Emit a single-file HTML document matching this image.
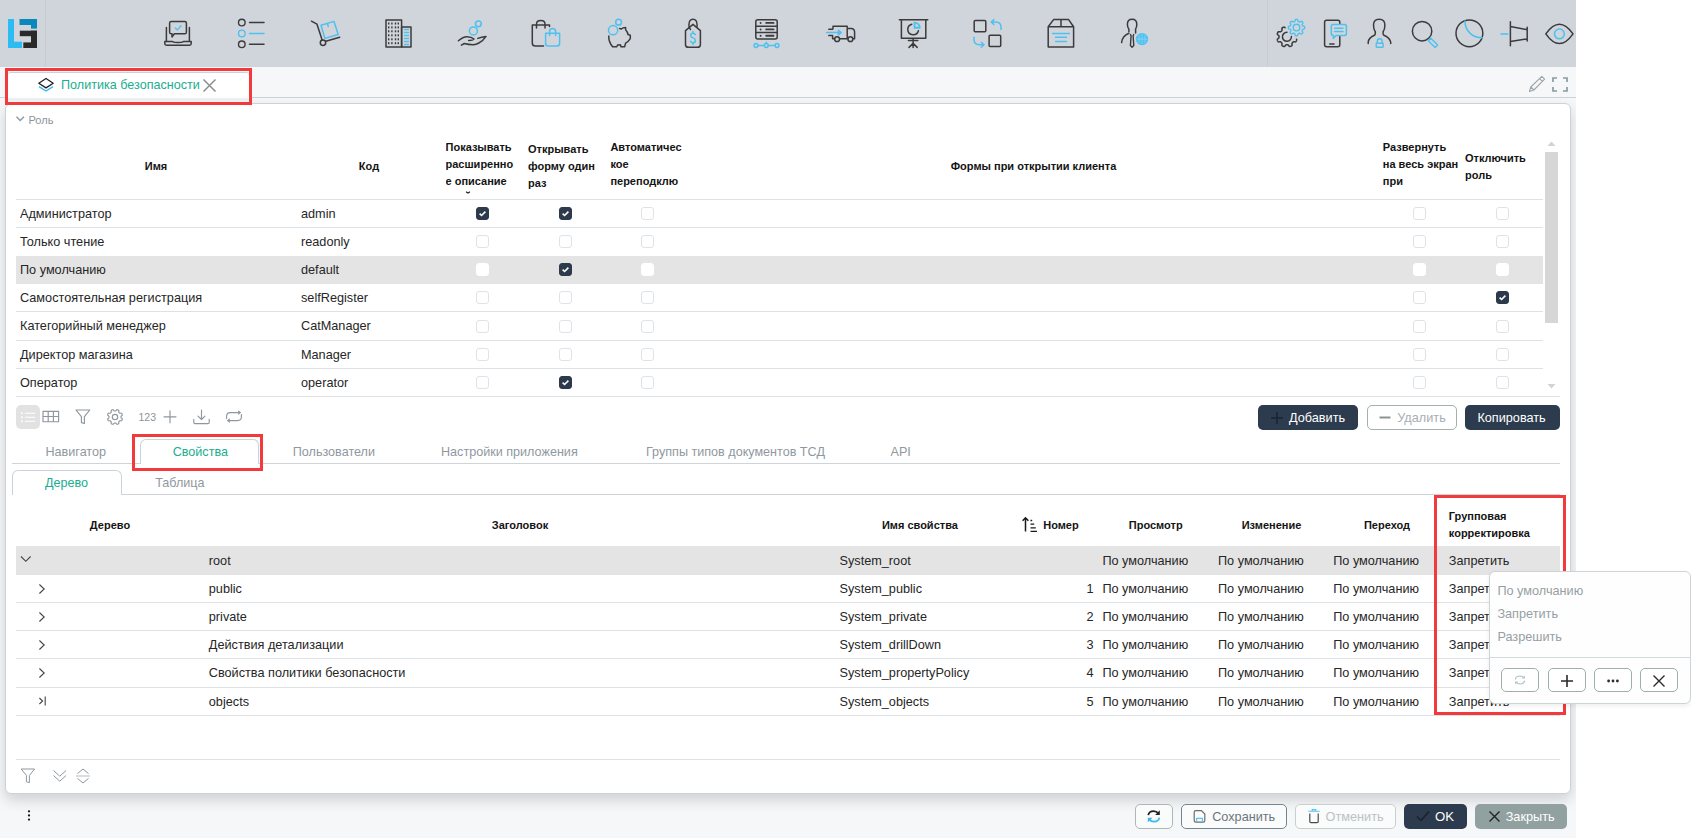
<!DOCTYPE html>
<html><head><meta charset="utf-8">
<style>
*{box-sizing:border-box}
html,body{margin:0;padding:0}
body{width:1691px;height:838px;position:relative;overflow:hidden;background:#fff;font-family:"Liberation Sans",sans-serif;color:#1e1e1e}
.a{position:absolute}
.t{position:absolute;white-space:nowrap}
.cb{position:absolute;width:13px;height:13px;border:1px solid #dfe2e6;border-radius:3px;background:#fff}
.cb.on{background:#2c3a4b;border-color:#2c3a4b}
.cb.hl{border-color:#fff}
.red{position:absolute;border:3px solid #f2393b}
.btn{position:absolute;border-radius:5px}
</style></head><body>

<div class="a" style="left:0;top:0;width:1576px;height:838px;overflow:hidden">
<div class="a" style="left:0px;top:0px;width:1576px;height:838px;background:#f6f7f9"></div>
<div class="a" style="left:0px;top:0px;width:1576px;height:67px;background:#d0d4db"></div>
<svg class="a" style="left:0;top:0" width="1576" height="67" viewBox="0 0 1576 67">
<rect x="8" y="19" width="6" height="29" fill="#2bbcf4"/>
<rect x="8" y="41.7" width="14" height="6.3" fill="#2bbcf4"/>
<rect x="19.5" y="19" width="17.5" height="6" fill="#0a87bb"/>
<rect x="31" y="19" width="6" height="9.6" fill="#0a87bb"/>
<rect x="19.8" y="30.7" width="17.2" height="5.5" fill="#2a2a2a"/>
<rect x="31" y="30.7" width="6" height="17.3" fill="#2a2a2a"/>
<rect x="23.3" y="42.4" width="13.7" height="5.6" fill="#2a2a2a"/>
<line x1="45.5" y1="0" x2="45.5" y2="67" stroke="#c8ccd2" stroke-width="1"/>
<line x1="1267.5" y1="0" x2="1267.5" y2="67" stroke="#c9cccf" stroke-width="1"/>

   <g fill="none" stroke="#3b3b3b" stroke-width="1.5" stroke-linecap="round" stroke-linejoin="round">
    <!-- 1 laptop chat -->
    <path d="M166.4 27.5V41.2M189.4 27.5V41.2"/>
    <path d="M164.8 41.6H172.5Q174 42.6 178 42.6Q182 42.6 183.5 41.6H191.2V43.6Q191.2 45.3 189.5 45.3H166.5Q164.8 45.3 164.8 43.6Z"/>
    <path d="M171.2 21.6H184.8Q186.4 21.6 186.4 23.2V32.2Q186.4 33.8 184.8 33.8H174.4L172 37V33.8H171.2Q169.6 33.8 169.6 32.2V23.2Q169.6 21.6 171.2 21.6Z"/>
    <!-- 2 list -->
    <circle cx="241.8" cy="22.6" r="3.3" stroke-width="1.4"/><circle cx="241.8" cy="44.3" r="3.3" stroke-width="1.4"/>
    <path d="M249.5 22.6H264M249.5 44.3H264"/>
    <!-- 3 hand truck -->
    <path d="M311.4 21.2L317 24.2L322.2 40.2"/>
    <circle cx="323" cy="42.8" r="2.7"/>
    <path d="M325.8 41.3L339.7 37.3"/>
    <!-- 4 buildings -->
    <rect x="386" y="20" width="15.6" height="27"/>
    <rect x="401.6" y="27.1" width="9.4" height="19.9"/>
    <!-- 5 hand -->
    <path d="M458.4 40.8Q463 36.6 467.2 36.7Q471.5 36.8 474 39Q472.5 40.6 468.6 40.4"/>
    <path d="M477.8 38.4Q481.6 36.8 486 36.4Q483.5 40.5 478.8 43Q476 44.6 473.5 44.8Q468 44.6 464.3 43.5L461.4 45.1"/>
    <!-- 6 bags dark -->
    <path d="M549.5 26.5V25H532.3V43Q532.3 46.1 535.5 46.1H543.5"/>
    <path d="M536.5 28V24.2Q536.5 20.6 540.8 20.6Q545 20.6 545 24.2V28"/>
    <!-- 7 piggy -->
    <path d="M608.8 36Q608.4 41.5 612.6 46.8H616.6L617.8 44.8Q619.2 45.3 620.4 44.8L621 46.8H624.6L625.6 43.2Q628.3 41.8 630.3 38.6V35.3L628 34.5Q627.4 31.5 625.7 30L625.6 27.5Q622.8 27.6 621.3 29Q620.6 28.7 619.6 28.6"/>
    <!-- 8 tag -->
    <path d="M693 24.4L700.4 30.6V44.4Q700.4 47.3 697.5 47.3H688.4Q685.5 47.3 685.5 44.4V30.6Z"/>
    <path d="M690.5 29.5Q688.9 28.2 688.9 25.3Q688.9 19.2 693 19.2Q697.1 19.2 697.1 25.3Q697.1 26.2 696.8 27"/>
    <!-- 9 server -->
    <rect x="755.8" y="19.8" width="21.4" height="19.3" rx="2"/>
    <path d="M755.8 26.2H777.2M755.8 32.6H777.2"/>
    <path d="M766.2 22.9H773.5M766.2 29.4H773.5M766.2 35.8H773.5M760.6 22.9V23M760.6 29.4V29.5M760.6 35.8V35.9" stroke-width="1.9"/>
    <!-- 10 truck -->
    <path d="M833 28.5V26.2H847.2V38.7M847.2 28.4H851.2Q854.6 28.4 854.6 32.2V38.7H853.2M840 38.8H847.6M828.8 29.2H832.8M828.8 35.5H832.6V38.7H834.4"/>
    <circle cx="837.1" cy="39.2" r="2.4"/><circle cx="850.4" cy="39.2" r="2.4"/>
    <!-- 11 presentation -->
    <path d="M899.4 19.7H927.8M901.4 19.7V38.3H925.8V19.7"/>
    <path d="M911.8 24.2A5.4 5.4 0 1 0 918.4 30.8"/>
    <path d="M913.1 38.4V47.4M908.4 40.5H917.8M909 47.4L913.1 43.4L917.2 47.4"/>
    <!-- 12 swap squares -->
    <rect x="974.2" y="20.4" width="11.6" height="11.3" rx="1"/>
    <rect x="989.1" y="35.3" width="11.6" height="11.3" rx="1"/>
    <!-- 13 box -->
    <path d="M1053.6 19.6H1068.6L1073.6 26.7V47.1H1048.2V26.7Z M1048.2 26.7H1073.6M1061 19.6V26.7"/>
    <!-- 14 person -->
    <path d="M1128.9 31.8V29.2Q1127.4 27.5 1127.4 24.3Q1127.4 19.2 1132.1 19.2Q1136.8 19.2 1136.8 24.3Q1136.8 27.4 1135.6 29.1V33"/>
    <path d="M1128.9 33.2Q1122.2 35.8 1121.6 42.6"/>
    <path d="M1130.5 34.6L1131.1 35.8L1130.4 45.6L1132.1 47.3L1133.8 45.6L1133.1 35.8L1133.7 34.6" stroke-width="1.4"/>
    <!-- R1 gear dark -->
    <path d="M1296.57 39.19 L1296.68 39.49 L1296.69 39.77 L1296.65 40.03 L1296.58 40.29 L1296.49 40.54 L1296.39 40.79 L1296.27 41.03 L1296.15 41.27 L1296.00 41.50 L1295.81 41.70 L1295.55 41.85 L1295.16 41.91 L1294.63 41.87 L1294.09 41.78 L1293.68 41.76 L1293.41 41.82 L1293.21 41.94 L1293.05 42.08 L1292.89 42.22 L1292.74 42.37 L1292.59 42.52 L1292.45 42.67 L1292.30 42.82 L1292.16 42.98 L1292.04 43.17 L1291.97 43.43 L1291.97 43.81 L1292.05 44.34 L1292.11 44.88 L1292.07 45.30 L1291.93 45.58 L1291.73 45.77 L1291.51 45.92 L1291.27 46.05 L1291.03 46.17 L1290.78 46.27 L1290.53 46.36 L1290.27 46.44 L1290.01 46.49 L1289.73 46.49 L1289.44 46.40 L1289.11 46.14 L1288.77 45.72 L1288.46 45.29 L1288.19 45.01 L1287.95 44.87 L1287.73 44.82 L1287.52 44.80 L1287.31 44.80 L1287.10 44.80 L1286.89 44.80 L1286.68 44.80 L1286.46 44.80 L1286.25 44.82 L1286.03 44.88 L1285.79 45.02 L1285.52 45.32 L1285.20 45.76 L1284.86 46.17 L1284.54 46.41 L1284.24 46.49 L1283.97 46.49 L1283.70 46.43 L1283.45 46.36 L1283.20 46.26 L1282.95 46.16 L1282.71 46.04 L1282.47 45.91 L1282.25 45.76 L1282.06 45.56 L1281.92 45.27 L1281.89 44.84 L1281.96 44.29 L1282.03 43.77 L1282.03 43.40 L1281.95 43.15 L1281.83 42.97 L1281.69 42.81 L1281.54 42.66 L1281.39 42.51 L1281.24 42.36 L1281.10 42.21 L1280.94 42.06 L1280.78 41.93 L1280.57 41.82 L1280.29 41.76 L1279.87 41.79 L1279.32 41.87 L1278.80 41.91 L1278.42 41.84 L1278.17 41.68 L1277.99 41.48 L1277.84 41.25 L1277.72 41.01 L1277.61 40.77 L1277.51 40.52 L1277.42 40.27 L1277.35 40.01 L1277.31 39.74 L1277.32 39.46 L1277.45 39.16 L1277.75 38.83 L1278.19 38.49 L1278.60 38.18 L1278.84 37.93 L1278.95 37.70 L1278.99 37.48 L1279.00 37.27 L1279.00 37.06 L1279.00 36.84 L1279.00 36.63 L1279.00 36.42 L1278.99 36.21 L1278.97 36.00 L1278.90 35.77 L1278.72 35.53 L1278.38 35.25 L1277.93 34.92 L1277.55 34.58 L1277.36 34.26 L1277.30 33.97 L1277.32 33.70 L1277.38 33.44 L1277.47 33.18 L1277.56 32.93 L1277.67 32.69 L1277.79 32.45 L1277.92 32.22 L1278.09 32.00 L1278.30 31.82 L1278.62 31.70 L1279.09 31.70 L1279.65 31.78 L1280.13 31.84 L1280.47 31.82 L1280.70 31.72 L1280.87 31.60 L1281.03 31.45 L1281.18 31.31 L1281.33 31.16 L1281.48 31.01 L1281.63 30.86 L1281.77 30.70 L1281.90 30.53 L1282.00 30.31 L1282.04 30.00 L1282.00 29.54 L1281.91 28.99 L1281.89 28.49 L1281.99 28.15 L1282.16 27.92 L1282.38 27.75 L1282.61 27.61 L1282.84 27.49 L1283.09 27.38 L1283.34 27.28 L1283.59 27.20 L1283.85 27.13 L1284.12 27.10 L1284.41 27.14 L1284.72 27.30 L1285.06 27.65" stroke-width="1.5"/>
    <path d="M1291.4 36.4A4.5 4.5 0 1 1 1287 32.3" stroke-width="1.5"/>
    <!-- R2 phone -->
    <rect x="1324.6" y="20.3" width="15.2" height="26.4" rx="2"/>
    <path d="M1329.8 44H1334" stroke-width="1.6"/>
    <!-- R3 person lock -->
    <path d="M1368.2 43.5V42.2Q1368.6 37.8 1374.4 35.3Q1375.3 34.8 1375.3 33.4V31.8Q1373.5 29.5 1373.5 25Q1373.5 19.2 1379.2 19.2Q1384.9 19.2 1384.9 25Q1384.9 29.5 1383.1 31.8V33.4Q1383.1 34.8 1384 35.3Q1389.8 37.8 1390.7 42.2V43.5"/>
    <!-- R4 search -->
    <circle cx="1422.1" cy="31.2" r="9.7"/>
    <!-- R5 circle -->
    <circle cx="1469.4" cy="33.3" r="13.4"/>
    <!-- R6 megaphone -->
    <path d="M1510.4 21.8V45.8M1510.4 26.6L1527.2 29.7M1510.4 41.5L1527.2 38.9M1527.2 27.3V41"/>
    <!-- R7 eye -->
    <path d="M1545.8 33.9Q1559.4 14.5 1573 33.9Q1559.4 53.3 1545.8 33.9Z"/>
   </g>
   <g fill="none" stroke="#4ec1ef" stroke-width="1.5" stroke-linecap="round" stroke-linejoin="round">
    <path d="M175.2 28L177.4 29.9L181 25.8" stroke-width="1.3"/>
    <circle cx="241.8" cy="33.4" r="3.3" stroke-width="1.4"/><path d="M249.5 33.4H264"/>
    <path d="M321 25.3L334 21.4L338.2 34.5L324.9 38.4Z M327.4 23.4L328.3 26.6"/>
    <path d="M404.5 29.5H408.5M404.5 32.5H408.5M404.5 35.5H408.5M404.5 38.5H408.5M404.5 41.5H408.5M404.5 44.5H408.5" stroke-width="1.3"/>
    <circle cx="478.4" cy="23.8" r="2.9"/><circle cx="473.4" cy="30.9" r="4"/>
    <path d="M545.6 33.2H559.6V43.6Q559.6 46.1 557 46.1H548.2Q545.6 46.1 545.6 43.6Z"/>
    <path d="M549.6 35.5V31.6Q549.6 28.6 552.6 28.6Q555.6 28.6 555.6 31.6V35.5"/>
    <circle cx="618.6" cy="22.2" r="2.9"/><circle cx="613.1" cy="30.2" r="4.6"/>
    <path d="M695.4 34.6Q694.6 33.2 693 33.2Q690.7 33.2 690.7 35.4Q690.7 37.2 693 37.9Q695.4 38.7 695.4 40.7Q695.4 42.8 693 42.8Q691.2 42.8 690.5 41.4M693 31.6V33M693 43V44.4"/>
    <path d="M756 45.5H777M766.3 42.2V43.5"/>
    <circle cx="756" cy="45.5" r="1.9" fill="#d0d4db"/><circle cx="766.3" cy="45.5" r="1.9" fill="#d0d4db"/><circle cx="777" cy="45.5" r="1.9" fill="#d0d4db"/>
    <path d="M826.6 32.6H839"/><path d="M838.4 30.2L841.2 32.6L838.4 35Z" fill="#4ec1ef"/>
    <path d="M914.6 22.6V27.8H919.8A5.4 5.4 0 0 0 914.6 22.6Z" stroke-width="1.9"/>
    <path d="M1001 29.6V27.4Q1001 22 995.6 22H991.6M993.8 19.6L991.2 22L993.8 24.4"/>
    <path d="M974 37.3V39.6Q974 44.8 979.4 44.8H983.6M981.4 42.4L984 44.8L981.4 47.2"/>
    <path d="M1052.6 33.4H1069.4M1055.6 37.3H1066.4M1055.6 41.4H1066.4"/>
    <path d="M1304.70 27.60 L1304.69 27.81 L1304.68 28.03 L1304.64 28.24 L1304.58 28.45 L1304.46 28.65 L1304.23 28.82 L1303.84 28.96 L1303.38 29.06 L1302.99 29.16 L1302.75 29.27 L1302.61 29.41 L1302.52 29.56 L1302.45 29.71 L1302.38 29.86 L1302.32 30.01 L1302.26 30.16 L1302.20 30.32 L1302.14 30.47 L1302.10 30.64 L1302.10 30.84 L1302.19 31.09 L1302.40 31.43 L1302.66 31.83 L1302.83 32.20 L1302.87 32.49 L1302.82 32.71 L1302.71 32.91 L1302.59 33.08 L1302.45 33.24 L1302.30 33.40 L1302.14 33.55 L1301.98 33.69 L1301.81 33.81 L1301.61 33.92 L1301.39 33.97 L1301.10 33.93 L1300.73 33.76 L1300.33 33.50 L1299.99 33.29 L1299.74 33.20 L1299.54 33.20 L1299.37 33.24 L1299.22 33.30 L1299.06 33.36 L1298.91 33.42 L1298.76 33.48 L1298.61 33.55 L1298.46 33.62 L1298.31 33.71 L1298.17 33.85 L1298.06 34.09 L1297.96 34.48 L1297.86 34.94 L1297.72 35.33 L1297.55 35.56 L1297.35 35.68 L1297.14 35.74 L1296.93 35.78 L1296.71 35.79 L1296.50 35.80 L1296.29 35.79 L1296.07 35.78 L1295.86 35.74 L1295.65 35.68 L1295.45 35.56 L1295.28 35.33 L1295.14 34.94 L1295.04 34.48 L1294.94 34.09 L1294.83 33.85 L1294.69 33.71 L1294.54 33.62 L1294.39 33.55 L1294.24 33.48 L1294.09 33.42 L1293.94 33.36 L1293.78 33.30 L1293.63 33.24 L1293.46 33.20 L1293.26 33.20 L1293.01 33.29 L1292.67 33.50 L1292.27 33.76 L1291.90 33.93 L1291.61 33.97 L1291.39 33.92 L1291.19 33.81 L1291.02 33.69 L1290.86 33.55 L1290.70 33.40 L1290.55 33.24 L1290.41 33.08 L1290.29 32.91 L1290.18 32.71 L1290.13 32.49 L1290.17 32.20 L1290.34 31.83 L1290.60 31.43 L1290.81 31.09 L1290.90 30.84 L1290.90 30.64 L1290.86 30.47 L1290.80 30.32 L1290.74 30.16 L1290.68 30.01 L1290.62 29.86 L1290.55 29.71 L1290.48 29.56 L1290.39 29.41 L1290.25 29.27 L1290.01 29.16 L1289.62 29.06 L1289.16 28.96 L1288.77 28.82 L1288.54 28.65 L1288.42 28.45 L1288.36 28.24 L1288.32 28.03 L1288.31 27.81 L1288.30 27.60 L1288.31 27.39 L1288.32 27.17 L1288.36 26.96 L1288.42 26.75 L1288.54 26.55 L1288.77 26.38 L1289.16 26.24 L1289.62 26.14 L1290.01 26.04 L1290.25 25.93 L1290.39 25.79 L1290.48 25.64 L1290.55 25.49 L1290.62 25.34 L1290.68 25.19 L1290.74 25.04 L1290.80 24.88 L1290.86 24.73 L1290.90 24.56 L1290.90 24.36 L1290.81 24.11 L1290.60 23.77 L1290.34 23.37 L1290.17 23.00 L1290.13 22.71 L1290.18 22.49 L1290.29 22.29 L1290.41 22.12 L1290.55 21.96 L1290.70 21.80 L1290.86 21.65 L1291.02 21.51 L1291.19 21.39 L1291.39 21.28 L1291.61 21.23 L1291.90 21.27 L1292.27 21.44 L1292.67 21.70 L1293.01 21.91 L1293.26 22.00 L1293.46 22.00 L1293.63 21.96 L1293.78 21.90 L1293.94 21.84 L1294.09 21.78 L1294.24 21.72 L1294.39 21.65 L1294.54 21.58 L1294.69 21.49 L1294.83 21.35 L1294.94 21.11 L1295.04 20.72 L1295.14 20.26 L1295.28 19.87 L1295.45 19.64 L1295.65 19.52 L1295.86 19.46 L1296.07 19.42 L1296.29 19.41 L1296.50 19.40 L1296.71 19.41 L1296.93 19.42 L1297.14 19.46 L1297.35 19.52 L1297.55 19.64 L1297.72 19.87 L1297.86 20.26 L1297.96 20.72 L1298.06 21.11 L1298.17 21.35 L1298.31 21.49 L1298.46 21.58 L1298.61 21.65 L1298.76 21.72 L1298.91 21.78 L1299.06 21.84 L1299.22 21.90 L1299.37 21.96 L1299.54 22.00 L1299.74 22.00 L1299.99 21.91 L1300.33 21.70 L1300.73 21.44 L1301.10 21.27 L1301.39 21.23 L1301.61 21.28 L1301.81 21.39 L1301.98 21.51 L1302.14 21.65 L1302.30 21.80 L1302.45 21.96 L1302.59 22.12 L1302.71 22.29 L1302.82 22.49 L1302.87 22.71 L1302.83 23.00 L1302.66 23.37 L1302.40 23.77 L1302.19 24.11 L1302.10 24.36 L1302.10 24.56 L1302.14 24.73 L1302.20 24.88 L1302.26 25.04 L1302.32 25.19 L1302.38 25.34 L1302.45 25.49 L1302.52 25.64 L1302.61 25.79 L1302.75 25.93 L1302.99 26.04 L1303.38 26.14 L1303.84 26.24 L1304.23 26.38 L1304.46 26.55 L1304.58 26.75 L1304.64 26.96 L1304.68 27.17 L1304.69 27.39 L1304.70 27.60Z" stroke-width="1.4"/>
    <circle cx="1296.5" cy="27.6" r="3.3" stroke-width="1.4"/>
    <path d="M1333 24.4H1344.5Q1346.4 24.4 1346.4 26.3V33.6Q1346.4 35.5 1344.5 35.5H1336L1333.3 38.4V35.5Q1331.3 35.5 1331.3 33.6V26.3Q1331.3 24.4 1333 24.4Z" fill="#d0d4db"/>
    <path d="M1334.6 28.3H1343M1334.6 31.5H1343" stroke-width="1.4"/>
    <rect x="1376.2" y="43.2" width="7" height="4" rx=".6" stroke-width="1.4"/>
    <path d="M1377.3 43V41.3Q1377.3 38.8 1379.7 38.8Q1382.1 38.8 1382.1 41.3V43" stroke-width="1.4"/>
    <path d="M1428.3 40.8L1430.8 38.3L1437.6 45.1L1435.1 47.6Z" stroke-width="1.4"/>
    <path d="M1465 21A16.3 16.3 0 0 0 1482.2 37.7"/>
    <path d="M1501 33.9H1507.8"/>
    <circle cx="1559.4" cy="33.9" r="4.9"/>
   </g>
   <circle cx="1142" cy="39.1" r="6.2" fill="#4ec1ef"/>
   <path d="M1139 35V43.5M1142 34V44M1145 35V43.5M1136.5 39.1H1147.5" stroke="#9fdcf5" stroke-width=".6" fill="none"/>
   <g fill="#3b3b3b">
    <rect x="388.0" y="22.5" width="1.4" height="2"/><rect x="388.0" y="26.4" width="1.4" height="2"/><rect x="388.0" y="30.3" width="1.4" height="2"/><rect x="388.0" y="34.3" width="1.4" height="2"/><rect x="388.0" y="38.3" width="1.4" height="2"/><rect x="388.0" y="42.2" width="1.4" height="2"/><rect x="391.2" y="22.5" width="1.4" height="2"/><rect x="391.2" y="26.4" width="1.4" height="2"/><rect x="391.2" y="30.3" width="1.4" height="2"/><rect x="391.2" y="34.3" width="1.4" height="2"/><rect x="391.2" y="38.3" width="1.4" height="2"/><rect x="391.2" y="42.2" width="1.4" height="2"/><rect x="394.8" y="22.5" width="1.4" height="2"/><rect x="394.8" y="26.4" width="1.4" height="2"/><rect x="394.8" y="30.3" width="1.4" height="2"/><rect x="394.8" y="34.3" width="1.4" height="2"/><rect x="394.8" y="38.3" width="1.4" height="2"/><rect x="394.8" y="42.2" width="1.4" height="2"/><rect x="397.6" y="22.5" width="1.4" height="2"/><rect x="397.6" y="26.4" width="1.4" height="2"/><rect x="397.6" y="30.3" width="1.4" height="2"/><rect x="397.6" y="34.3" width="1.4" height="2"/><rect x="397.6" y="38.3" width="1.4" height="2"/><rect x="397.6" y="42.2" width="1.4" height="2"/>
   </g>

</svg>
<div class="a" style="left:0px;top:97px;width:1576px;height:1px;background:#cbd2d8"></div>
<div class="a" style="left:8px;top:72px;width:241px;height:29px;background:#fff;border-top:1px solid #c9d1d9;border-radius:3px 3px 0 0"></div>
<div class="a" style="left:8px;top:98px;width:241px;height:3px;background:#eff1f3"></div>
<svg class="a" style="left:36px;top:76px;" width="20" height="18" viewBox="0 0 20 18"><path d="M10 2.5L17.2 7.2L10 11.9L2.8 7.2Z" fill="none" stroke="#222" stroke-width="1.3" stroke-linejoin="round"/><path d="M3 10.6L10 15L17 10.6" fill="none" stroke="#3db8ee" stroke-width="1.4"/></svg>
<div class="t" style="left:61px;top:74.73px;height:20px;line-height:20px;font-size:12.6px;color:#20ad8f;font-weight:normal;">Политика безопасности</div>
<svg class="a" style="left:202px;top:78px;" width="15" height="15" viewBox="0 0 15 15"><path d="M1.5 1.5L13.5 13.5M13.5 1.5L1.5 13.5" stroke="#8e8e8e" stroke-width="1.5"/></svg>
<svg class="a" style="left:1527px;top:75px;" width="20" height="19" viewBox="0 0 20 19"><path d="M2.5 16.5L3.8 12L14.8 1.4L17.6 4.2L6.9 15Z M12.6 3.6L15.4 6.4 M3.8 12L6.9 15" fill="none" stroke="#9aa5ac" stroke-width="1.1" stroke-linejoin="round"/></svg>
<svg class="a" style="left:1551px;top:76px;" width="18" height="17" viewBox="0 0 18 17"><path d="M2 6V2H6M12 2H16V6M16 11V15H12M6 15H2V11" fill="none" stroke="#8b9aa4" stroke-width="1.7"/></svg>
<div class="a" style="left:5px;top:103px;width:1566px;height:691px;background:#fff;border:1px solid #cfd2d5;border-radius:6px;box-shadow:0 6px 14px rgba(0,0,0,.16)"></div>
<svg class="a" style="left:15px;top:115px;" width="11" height="8" viewBox="0 0 11 8"><path d="M1.5 1.8L5.2 5.6L9 1.8" fill="none" stroke="#8a9aa6" stroke-width="1.4"/></svg>
<div class="t" style="left:28.5px;top:110.40px;height:20px;line-height:20px;font-size:11px;color:#8b949b;font-weight:normal;">Роль</div>
<div class="t" style="left:-144px;width:600px;text-align:center;top:156.30px;height:20px;line-height:20px;font-size:11px;color:#141414;font-weight:bold;">Имя</div>
<div class="t" style="left:69px;width:600px;text-align:center;top:156.30px;height:20px;line-height:20px;font-size:11px;color:#141414;font-weight:bold;">Код</div>
<div class="t" style="left:733.5px;width:600px;text-align:center;top:156.30px;height:20px;line-height:20px;font-size:11px;color:#141414;font-weight:bold;">Формы при открытии клиента</div>
<div class="a" style="left:445.5px;top:139px;width:90px;height:55px;overflow:hidden;font-weight:bold;font-size:11px;line-height:16.8px;color:#141414;white-space:normal">Показывать<br>расширенно<br>е описание<br>краткое</div>
<svg class="a" style="left:464px;top:189px;" width="8" height="6" viewBox="0 0 8 6"><path d="M2.2 2.6Q4 5.2 5.8 2.6" fill="none" stroke="#222" stroke-width="1.2"/></svg>
<div class="a" style="left:528px;top:141.3px;width:90px;height:52.69999999999999px;overflow:hidden;font-weight:bold;font-size:11px;line-height:16.8px;color:#141414;white-space:normal">Открывать<br>форму один<br>раз</div>
<div class="a" style="left:610.4px;top:139px;width:90px;height:55px;overflow:hidden;font-weight:bold;font-size:11px;line-height:16.8px;color:#141414;white-space:normal">Автоматичес<br>кое<br>переподклю<br>чение</div>
<div class="a" style="left:1382.8px;top:139px;width:90px;height:55px;overflow:hidden;font-weight:bold;font-size:11px;line-height:16.8px;color:#141414;white-space:normal">Развернуть<br>на весь экран<br>при<br>открытии</div>
<div class="a" style="left:1465px;top:150px;width:90px;height:44px;overflow:hidden;font-weight:bold;font-size:11px;line-height:16.8px;color:#141414;white-space:normal">Отключить<br>роль</div>
<div class="t" style="left:20px;top:203.73px;height:20px;line-height:20px;font-size:12.7px;color:#262626;font-weight:normal;">Администратор</div>
<div class="t" style="left:301px;top:203.73px;height:20px;line-height:20px;font-size:12.7px;color:#262626;font-weight:normal;">admin</div>
<div class="cb on" style="left:476.0px;top:207.0px"><svg width="11" height="11" viewBox="0 0 11 11" style="position:absolute;left:0;top:0"><path d="M2.6 5.6L4.6 7.5L8.4 3.6" fill="none" stroke="#fff" stroke-width="1.6"/></svg></div>
<div class="cb on" style="left:558.9px;top:207.0px"><svg width="11" height="11" viewBox="0 0 11 11" style="position:absolute;left:0;top:0"><path d="M2.6 5.6L4.6 7.5L8.4 3.6" fill="none" stroke="#fff" stroke-width="1.6"/></svg></div>
<div class="cb" style="left:640.9px;top:207.0px"></div>
<div class="cb" style="left:1412.9px;top:207.0px"></div>
<div class="cb" style="left:1496.0px;top:207.0px"></div>
<div class="t" style="left:20px;top:231.73px;height:20px;line-height:20px;font-size:12.7px;color:#262626;font-weight:normal;">Только чтение</div>
<div class="t" style="left:301px;top:231.73px;height:20px;line-height:20px;font-size:12.7px;color:#262626;font-weight:normal;">readonly</div>
<div class="cb" style="left:476.0px;top:235.0px"></div>
<div class="cb" style="left:558.9px;top:235.0px"></div>
<div class="cb" style="left:640.9px;top:235.0px"></div>
<div class="cb" style="left:1412.9px;top:235.0px"></div>
<div class="cb" style="left:1496.0px;top:235.0px"></div>
<div class="a" style="left:16px;top:255.5px;width:1527px;height:28px;background:#e4e4e4"></div>
<div class="t" style="left:20px;top:259.73px;height:20px;line-height:20px;font-size:12.7px;color:#262626;font-weight:normal;">По умолчанию</div>
<div class="t" style="left:301px;top:259.73px;height:20px;line-height:20px;font-size:12.7px;color:#262626;font-weight:normal;">default</div>
<div class="cb hl" style="left:476.0px;top:263.0px"></div>
<div class="cb on" style="left:558.9px;top:263.0px"><svg width="11" height="11" viewBox="0 0 11 11" style="position:absolute;left:0;top:0"><path d="M2.6 5.6L4.6 7.5L8.4 3.6" fill="none" stroke="#fff" stroke-width="1.6"/></svg></div>
<div class="cb hl" style="left:640.9px;top:263.0px"></div>
<div class="cb hl" style="left:1412.9px;top:263.0px"></div>
<div class="cb hl" style="left:1496.0px;top:263.0px"></div>
<div class="t" style="left:20px;top:287.73px;height:20px;line-height:20px;font-size:12.7px;color:#262626;font-weight:normal;">Самостоятельная регистрация</div>
<div class="t" style="left:301px;top:287.73px;height:20px;line-height:20px;font-size:12.7px;color:#262626;font-weight:normal;">selfRegister</div>
<div class="cb" style="left:476.0px;top:291.0px"></div>
<div class="cb" style="left:558.9px;top:291.0px"></div>
<div class="cb" style="left:640.9px;top:291.0px"></div>
<div class="cb" style="left:1412.9px;top:291.0px"></div>
<div class="cb on" style="left:1496.0px;top:291.0px"><svg width="11" height="11" viewBox="0 0 11 11" style="position:absolute;left:0;top:0"><path d="M2.6 5.6L4.6 7.5L8.4 3.6" fill="none" stroke="#fff" stroke-width="1.6"/></svg></div>
<div class="t" style="left:20px;top:316.23px;height:20px;line-height:20px;font-size:12.7px;color:#262626;font-weight:normal;">Категорийный менеджер</div>
<div class="t" style="left:301px;top:316.23px;height:20px;line-height:20px;font-size:12.7px;color:#262626;font-weight:normal;">CatManager</div>
<div class="cb" style="left:476.0px;top:319.5px"></div>
<div class="cb" style="left:558.9px;top:319.5px"></div>
<div class="cb" style="left:640.9px;top:319.5px"></div>
<div class="cb" style="left:1412.9px;top:319.5px"></div>
<div class="cb" style="left:1496.0px;top:319.5px"></div>
<div class="t" style="left:20px;top:344.73px;height:20px;line-height:20px;font-size:12.7px;color:#262626;font-weight:normal;">Директор магазина</div>
<div class="t" style="left:301px;top:344.73px;height:20px;line-height:20px;font-size:12.7px;color:#262626;font-weight:normal;">Manager</div>
<div class="cb" style="left:476.0px;top:348.0px"></div>
<div class="cb" style="left:558.9px;top:348.0px"></div>
<div class="cb" style="left:640.9px;top:348.0px"></div>
<div class="cb" style="left:1412.9px;top:348.0px"></div>
<div class="cb" style="left:1496.0px;top:348.0px"></div>
<div class="t" style="left:20px;top:372.73px;height:20px;line-height:20px;font-size:12.7px;color:#262626;font-weight:normal;">Оператор</div>
<div class="t" style="left:301px;top:372.73px;height:20px;line-height:20px;font-size:12.7px;color:#262626;font-weight:normal;">operator</div>
<div class="cb" style="left:476.0px;top:376.0px"></div>
<div class="cb on" style="left:558.9px;top:376.0px"><svg width="11" height="11" viewBox="0 0 11 11" style="position:absolute;left:0;top:0"><path d="M2.6 5.6L4.6 7.5L8.4 3.6" fill="none" stroke="#fff" stroke-width="1.6"/></svg></div>
<div class="cb" style="left:640.9px;top:376.0px"></div>
<div class="cb" style="left:1412.9px;top:376.0px"></div>
<div class="cb" style="left:1496.0px;top:376.0px"></div>
<div class="a" style="left:16px;top:199px;width:1527px;height:1px;background:#dde2e7"></div>
<div class="a" style="left:16px;top:227px;width:1527px;height:1px;background:#dde2e7"></div>
<div class="a" style="left:16px;top:311px;width:1527px;height:1px;background:#dde2e7"></div>
<div class="a" style="left:16px;top:340px;width:1527px;height:1px;background:#dde2e7"></div>
<div class="a" style="left:16px;top:368px;width:1527px;height:1px;background:#dde2e7"></div>
<div class="a" style="left:16px;top:396px;width:1544px;height:1px;background:#dde2e7"></div>
<div class="a" style="left:1545px;top:152px;width:13px;height:171px;background:#d6d6d6"></div>
<svg class="a" style="left:1546px;top:140px;" width="11" height="7" viewBox="0 0 11 7"><path d="M1.5 6L5.5 1.5L9.5 6Z" fill="#d3d3d3"/></svg>
<svg class="a" style="left:1546px;top:383px;" width="11" height="7" viewBox="0 0 11 7"><path d="M1.5 1L5.5 5.5L9.5 1Z" fill="#d3d3d3"/></svg>
<div class="a" style="left:16px;top:405px;width:24px;height:24px;background:#e2e2e2;border-radius:5px"></div>
<svg class="a" style="left:16px;top:405px;" width="24" height="24" viewBox="0 0 24 24"><path d="M8.8 8.2H19M8.8 12.2H19M8.8 16.2H19" stroke="#fff" stroke-width="1.1"/><circle cx="5.8" cy="8.2" r="0.95" fill="#fff"/><circle cx="5.8" cy="12.2" r="0.95" fill="#fff"/><circle cx="5.8" cy="16.2" r="0.95" fill="#fff"/></svg>
<svg class="a" style="left:42px;top:410px;" width="18" height="13" viewBox="0 0 18 13"><path d="M1 1.3H16.6V11.7H1Z M1 6.5H16.6 M6.2 1.3V11.7 M11.4 1.3V11.7" fill="none" stroke="#8f969d" stroke-width="1.15" stroke-linejoin="round" stroke-linecap="round"/></svg>
<svg class="a" style="left:75px;top:409px;" width="16" height="16" viewBox="0 0 16 16"><path d="M1 1H14.8L9.4 7.6V14.5L6.4 13.6V7.6Z" fill="none" stroke="#8f969d" stroke-width="1.15" stroke-linejoin="round" stroke-linecap="round"/></svg>
<svg class="a" style="left:106px;top:408px;" width="18" height="18" viewBox="0 0 18 18"><circle cx="9" cy="9" r="2.7" fill="none" stroke="#8f969d" stroke-width="1.15" stroke-linejoin="round" stroke-linecap="round"/><path d="M15.00 9.00 L15.00 9.19 L15.01 9.38 L15.03 9.57 L15.10 9.77 L15.29 10.00 L15.62 10.26 L15.99 10.56 L16.23 10.86 L16.30 11.12 L16.29 11.37 L16.24 11.60 L16.16 11.83 L16.07 12.06 L15.96 12.27 L15.83 12.48 L15.66 12.66 L15.42 12.80 L15.05 12.84 L14.57 12.79 L14.15 12.74 L13.86 12.77 L13.67 12.86 L13.52 12.98 L13.38 13.11 L13.24 13.24 L13.11 13.38 L12.98 13.52 L12.86 13.67 L12.77 13.86 L12.74 14.15 L12.79 14.57 L12.84 15.05 L12.80 15.42 L12.66 15.66 L12.48 15.83 L12.27 15.96 L12.06 16.07 L11.83 16.16 L11.60 16.24 L11.37 16.29 L11.12 16.30 L10.86 16.23 L10.56 15.99 L10.26 15.62 L10.00 15.29 L9.77 15.10 L9.57 15.03 L9.38 15.01 L9.19 15.00 L9.00 15.00 L8.81 15.00 L8.62 15.01 L8.43 15.03 L8.23 15.10 L8.00 15.29 L7.74 15.62 L7.44 15.99 L7.14 16.23 L6.88 16.30 L6.63 16.29 L6.40 16.24 L6.17 16.16 L5.94 16.07 L5.73 15.96 L5.52 15.83 L5.34 15.66 L5.20 15.42 L5.16 15.05 L5.21 14.57 L5.26 14.15 L5.23 13.86 L5.14 13.67 L5.02 13.52 L4.89 13.38 L4.76 13.24 L4.62 13.11 L4.48 12.98 L4.33 12.86 L4.14 12.77 L3.85 12.74 L3.43 12.79 L2.95 12.84 L2.58 12.80 L2.34 12.66 L2.17 12.48 L2.04 12.27 L1.93 12.06 L1.84 11.83 L1.76 11.60 L1.71 11.37 L1.70 11.12 L1.77 10.86 L2.01 10.56 L2.38 10.26 L2.71 10.00 L2.90 9.77 L2.97 9.57 L2.99 9.38 L3.00 9.19 L3.00 9.00 L3.00 8.81 L2.99 8.62 L2.97 8.43 L2.90 8.23 L2.71 8.00 L2.38 7.74 L2.01 7.44 L1.77 7.14 L1.70 6.88 L1.71 6.63 L1.76 6.40 L1.84 6.17 L1.93 5.94 L2.04 5.73 L2.17 5.52 L2.34 5.34 L2.58 5.20 L2.95 5.16 L3.43 5.21 L3.85 5.26 L4.14 5.23 L4.33 5.14 L4.48 5.02 L4.62 4.89 L4.76 4.76 L4.89 4.62 L5.02 4.48 L5.14 4.33 L5.23 4.14 L5.26 3.85 L5.21 3.43 L5.16 2.95 L5.20 2.58 L5.34 2.34 L5.52 2.17 L5.73 2.04 L5.94 1.93 L6.17 1.84 L6.40 1.76 L6.63 1.71 L6.88 1.70 L7.14 1.77 L7.44 2.01 L7.74 2.38 L8.00 2.71 L8.23 2.90 L8.43 2.97 L8.62 2.99 L8.81 3.00 L9.00 3.00 L9.19 3.00 L9.38 2.99 L9.57 2.97 L9.77 2.90 L10.00 2.71 L10.26 2.38 L10.56 2.01 L10.86 1.77 L11.12 1.70 L11.37 1.71 L11.60 1.76 L11.83 1.84 L12.06 1.93 L12.27 2.04 L12.48 2.17 L12.66 2.34 L12.80 2.58 L12.84 2.95 L12.79 3.43 L12.74 3.85 L12.77 4.14 L12.86 4.33 L12.98 4.48 L13.11 4.62 L13.24 4.76 L13.38 4.89 L13.52 5.02 L13.67 5.14 L13.86 5.23 L14.15 5.26 L14.57 5.21 L15.05 5.16 L15.42 5.20 L15.66 5.34 L15.83 5.52 L15.96 5.73 L16.07 5.94 L16.16 6.17 L16.24 6.40 L16.29 6.63 L16.30 6.88 L16.23 7.14 L15.99 7.44 L15.62 7.74 L15.29 8.00 L15.10 8.23 L15.03 8.43 L15.01 8.62 L15.00 8.81 L15.00 9.00Z" fill="none" stroke="#8f969d" stroke-width="1.15" stroke-linejoin="round" stroke-linecap="round"/></svg>
<div class="t" style="left:138.5px;top:406.79px;height:20px;line-height:20px;font-size:10.5px;color:#8d949b;font-weight:normal;">123</div>
<svg class="a" style="left:162px;top:409px;" width="16" height="16" viewBox="0 0 16 16"><path d="M8 1.8V13.8M2 7.8H14" fill="none" stroke="#8f969d" stroke-width="1.15" stroke-linejoin="round" stroke-linecap="round" stroke-width="1.3"/></svg>
<svg class="a" style="left:192px;top:408px;" width="19" height="17" viewBox="0 0 19 17"><path d="M9.5 2V11.4M6 8.1L9.5 11.5L13 8.1M1.8 11.2V14.4Q1.8 15.6 3 15.6H16Q17.2 15.6 17.2 14.4V11.2" fill="none" stroke="#8f969d" stroke-width="1.15" stroke-linejoin="round" stroke-linecap="round"/></svg>
<svg class="a" style="left:224px;top:408px;" width="20" height="17" viewBox="0 0 20 17"><path d="M2.6 10.6V8.4Q2.6 4.6 6.4 4.6H14.4M17.4 6.6V8.8Q17.4 12.6 13.6 12.6H5.6" fill="none" stroke="#8f969d" stroke-width="1.15" stroke-linejoin="round" stroke-linecap="round"/><path d="M14.2 2.2L17.2 4.6L14.2 7Z M5.8 10.2L2.8 12.6L5.8 15Z" fill="#8f969d"/></svg>
<div class="a" style="left:1258px;top:405px;width:100px;height:25px;background:#2c3b4d;border-radius:5px"></div>
<svg class="a" style="left:1270px;top:411px;" width="14" height="14" viewBox="0 0 14 14"><path d="M7 1V13M1 7H13" stroke="#1b2632" stroke-width="1.6"/></svg>
<div class="t" style="left:1289px;top:408.03px;height:20px;line-height:20px;font-size:12.7px;color:#fff;font-weight:normal;">Добавить</div>
<div class="a" style="left:1366.5px;top:405px;width:90px;height:25px;background:#fff;border:1px solid #a3b0ae;border-radius:5px"></div>
<svg class="a" style="left:1379px;top:416px;" width="12" height="3" viewBox="0 0 12 3"><path d="M0.5 1.5H11.5" stroke="#8c9492" stroke-width="2"/></svg>
<div class="t" style="left:1397.3px;top:408.03px;height:20px;line-height:20px;font-size:12.7px;color:#a7aeb3;font-weight:normal;">Удалить</div>
<div class="a" style="left:1465px;top:405px;width:95px;height:25px;background:#2c3b4d;border-radius:5px"></div>
<div class="t" style="left:1477.4px;top:408.03px;height:20px;line-height:20px;font-size:12.7px;color:#fff;font-weight:normal;">Копировать</div>
<div class="a" style="left:12px;top:463px;width:1548px;height:1px;background:#cdd4da"></div>
<div class="a" style="left:139.5px;top:439px;width:119.5px;height:25px;background:#fff;border:1px solid #cbd3da;border-bottom:none;border-radius:6px 6px 0 0"></div>
<div class="t" style="left:45.5px;top:442.03px;height:20px;line-height:20px;font-size:12.6px;color:#8f989f;font-weight:normal;">Навигатор</div>
<div class="t" style="left:172.7px;top:442.03px;height:20px;line-height:20px;font-size:12.6px;color:#20ad8f;font-weight:normal;">Свойства</div>
<div class="t" style="left:292.8px;top:442.03px;height:20px;line-height:20px;font-size:12.6px;color:#8f989f;font-weight:normal;">Пользователи</div>
<div class="t" style="left:441px;top:442.03px;height:20px;line-height:20px;font-size:12.6px;color:#8f989f;font-weight:normal;">Настройки приложения</div>
<div class="t" style="left:646px;top:442.03px;height:20px;line-height:20px;font-size:12.6px;color:#8f989f;font-weight:normal;">Группы типов документов ТСД</div>
<div class="t" style="left:890.5px;top:442.03px;height:20px;line-height:20px;font-size:12.6px;color:#8f989f;font-weight:normal;">API</div>
<div class="a" style="left:12px;top:494px;width:1548px;height:1px;background:#cdd4da"></div>
<div class="a" style="left:12px;top:470px;width:110px;height:25px;background:#fff;border:1px solid #cbd3da;border-bottom:none;border-radius:6px 6px 0 0"></div>
<div class="t" style="left:45px;top:473.03px;height:20px;line-height:20px;font-size:12.6px;color:#20ad8f;font-weight:normal;">Дерево</div>
<div class="t" style="left:155.2px;top:473.03px;height:20px;line-height:20px;font-size:12.6px;color:#8f989f;font-weight:normal;">Таблица</div>
<div class="t" style="left:-190px;width:600px;text-align:center;top:515.40px;height:20px;line-height:20px;font-size:11px;color:#141414;font-weight:bold;">Дерево</div>
<div class="t" style="left:220px;width:600px;text-align:center;top:515.40px;height:20px;line-height:20px;font-size:11px;color:#141414;font-weight:bold;">Заголовок</div>
<div class="t" style="left:619.9px;width:600px;text-align:center;top:515.40px;height:20px;line-height:20px;font-size:11px;color:#141414;font-weight:bold;">Имя свойства</div>
<svg class="a" style="left:1021px;top:516px;" width="18" height="17" viewBox="0 0 18 17"><path d="M4.5 15.5V2M1.6 4.8L4.5 1.8L7.4 4.8" fill="none" stroke="#1a1a1a" stroke-width="1.5"/><path d="M9.5 4.5H11.2M9.5 8.2H13.2M9.5 11.8H14.8M9.5 15.3H16" stroke="#1a1a1a" stroke-width="1.3"/></svg>
<div class="t" style="left:1043.2px;top:515.40px;height:20px;line-height:20px;font-size:11px;color:#141414;font-weight:bold;">Номер</div>
<div class="t" style="left:855.7px;width:600px;text-align:center;top:515.40px;height:20px;line-height:20px;font-size:11px;color:#141414;font-weight:bold;">Просмотр</div>
<div class="t" style="left:971.5px;width:600px;text-align:center;top:515.40px;height:20px;line-height:20px;font-size:11px;color:#141414;font-weight:bold;">Изменение</div>
<div class="t" style="left:1087px;width:600px;text-align:center;top:515.40px;height:20px;line-height:20px;font-size:11px;color:#141414;font-weight:bold;">Переход</div>
<div class="a" style="left:1448.8px;top:507.8px;width:110px;height:40px;font-weight:bold;font-size:11px;line-height:16.8px;color:#141414;white-space:normal;line-height:17.4px">Групповая<br>корректировка</div>
<div class="a" style="left:16px;top:546px;width:1544px;height:28.5px;background:#e4e4e4"></div>
<div class="t" style="left:208.8px;top:550.88px;height:20px;line-height:20px;font-size:12.7px;color:#262626;font-weight:normal;">root</div>
<div class="t" style="left:839.5px;top:550.88px;height:20px;line-height:20px;font-size:12.7px;color:#262626;font-weight:normal;">System_root</div>
<div class="t" style="left:1102.4px;top:550.88px;height:20px;line-height:20px;font-size:12.7px;color:#262626;font-weight:normal;">По умолчанию</div>
<div class="t" style="left:1218px;top:550.88px;height:20px;line-height:20px;font-size:12.7px;color:#262626;font-weight:normal;">По умолчанию</div>
<div class="t" style="left:1333.2px;top:550.88px;height:20px;line-height:20px;font-size:12.7px;color:#262626;font-weight:normal;">По умолчанию</div>
<div class="t" style="left:1448.8px;top:550.88px;height:20px;line-height:20px;font-size:12.7px;color:#262626;font-weight:normal;">Запретить</div>
<div class="t" style="left:208.8px;top:578.98px;height:20px;line-height:20px;font-size:12.7px;color:#262626;font-weight:normal;">public</div>
<div class="t" style="left:839.5px;top:578.98px;height:20px;line-height:20px;font-size:12.7px;color:#262626;font-weight:normal;">System_public</div>
<div class="t" style="left:493.5px;width:600px;text-align:right;top:578.98px;height:20px;line-height:20px;font-size:12.7px;color:#262626;font-weight:normal;">1</div>
<div class="t" style="left:1102.4px;top:578.98px;height:20px;line-height:20px;font-size:12.7px;color:#262626;font-weight:normal;">По умолчанию</div>
<div class="t" style="left:1218px;top:578.98px;height:20px;line-height:20px;font-size:12.7px;color:#262626;font-weight:normal;">По умолчанию</div>
<div class="t" style="left:1333.2px;top:578.98px;height:20px;line-height:20px;font-size:12.7px;color:#262626;font-weight:normal;">По умолчанию</div>
<div class="t" style="left:1448.8px;top:578.98px;height:20px;line-height:20px;font-size:12.7px;color:#262626;font-weight:normal;">Запретить</div>
<div class="a" style="left:16px;top:602px;width:1544px;height:1px;background:#dde2e7"></div>
<div class="t" style="left:208.8px;top:606.73px;height:20px;line-height:20px;font-size:12.7px;color:#262626;font-weight:normal;">private</div>
<div class="t" style="left:839.5px;top:606.73px;height:20px;line-height:20px;font-size:12.7px;color:#262626;font-weight:normal;">System_private</div>
<div class="t" style="left:493.5px;width:600px;text-align:right;top:606.73px;height:20px;line-height:20px;font-size:12.7px;color:#262626;font-weight:normal;">2</div>
<div class="t" style="left:1102.4px;top:606.73px;height:20px;line-height:20px;font-size:12.7px;color:#262626;font-weight:normal;">По умолчанию</div>
<div class="t" style="left:1218px;top:606.73px;height:20px;line-height:20px;font-size:12.7px;color:#262626;font-weight:normal;">По умолчанию</div>
<div class="t" style="left:1333.2px;top:606.73px;height:20px;line-height:20px;font-size:12.7px;color:#262626;font-weight:normal;">По умолчанию</div>
<div class="t" style="left:1448.8px;top:606.73px;height:20px;line-height:20px;font-size:12.7px;color:#262626;font-weight:normal;">Запретить</div>
<div class="a" style="left:16px;top:630px;width:1544px;height:1px;background:#dde2e7"></div>
<div class="t" style="left:208.8px;top:634.73px;height:20px;line-height:20px;font-size:12.7px;color:#262626;font-weight:normal;">Действия детализации</div>
<div class="t" style="left:839.5px;top:634.73px;height:20px;line-height:20px;font-size:12.7px;color:#262626;font-weight:normal;">System_drillDown</div>
<div class="t" style="left:493.5px;width:600px;text-align:right;top:634.73px;height:20px;line-height:20px;font-size:12.7px;color:#262626;font-weight:normal;">3</div>
<div class="t" style="left:1102.4px;top:634.73px;height:20px;line-height:20px;font-size:12.7px;color:#262626;font-weight:normal;">По умолчанию</div>
<div class="t" style="left:1218px;top:634.73px;height:20px;line-height:20px;font-size:12.7px;color:#262626;font-weight:normal;">По умолчанию</div>
<div class="t" style="left:1333.2px;top:634.73px;height:20px;line-height:20px;font-size:12.7px;color:#262626;font-weight:normal;">По умолчанию</div>
<div class="t" style="left:1448.8px;top:634.73px;height:20px;line-height:20px;font-size:12.7px;color:#262626;font-weight:normal;">Запретить</div>
<div class="a" style="left:16px;top:658px;width:1544px;height:1px;background:#dde2e7"></div>
<div class="t" style="left:208.8px;top:663.23px;height:20px;line-height:20px;font-size:12.7px;color:#262626;font-weight:normal;">Свойства политики безопасности</div>
<div class="t" style="left:839.5px;top:663.23px;height:20px;line-height:20px;font-size:12.7px;color:#262626;font-weight:normal;">System_propertyPolicy</div>
<div class="t" style="left:493.5px;width:600px;text-align:right;top:663.23px;height:20px;line-height:20px;font-size:12.7px;color:#262626;font-weight:normal;">4</div>
<div class="t" style="left:1102.4px;top:663.23px;height:20px;line-height:20px;font-size:12.7px;color:#262626;font-weight:normal;">По умолчанию</div>
<div class="t" style="left:1218px;top:663.23px;height:20px;line-height:20px;font-size:12.7px;color:#262626;font-weight:normal;">По умолчанию</div>
<div class="t" style="left:1333.2px;top:663.23px;height:20px;line-height:20px;font-size:12.7px;color:#262626;font-weight:normal;">По умолчанию</div>
<div class="t" style="left:1448.8px;top:663.23px;height:20px;line-height:20px;font-size:12.7px;color:#262626;font-weight:normal;">Запретить</div>
<div class="a" style="left:16px;top:687px;width:1544px;height:1px;background:#dde2e7"></div>
<div class="t" style="left:208.8px;top:691.73px;height:20px;line-height:20px;font-size:12.7px;color:#262626;font-weight:normal;">objects</div>
<div class="t" style="left:839.5px;top:691.73px;height:20px;line-height:20px;font-size:12.7px;color:#262626;font-weight:normal;">System_objects</div>
<div class="t" style="left:493.5px;width:600px;text-align:right;top:691.73px;height:20px;line-height:20px;font-size:12.7px;color:#262626;font-weight:normal;">5</div>
<div class="t" style="left:1102.4px;top:691.73px;height:20px;line-height:20px;font-size:12.7px;color:#262626;font-weight:normal;">По умолчанию</div>
<div class="t" style="left:1218px;top:691.73px;height:20px;line-height:20px;font-size:12.7px;color:#262626;font-weight:normal;">По умолчанию</div>
<div class="t" style="left:1333.2px;top:691.73px;height:20px;line-height:20px;font-size:12.7px;color:#262626;font-weight:normal;">По умолчанию</div>
<div class="t" style="left:1448.8px;top:691.73px;height:20px;line-height:20px;font-size:12.7px;color:#262626;font-weight:normal;">Запретить</div>
<div class="a" style="left:16px;top:715px;width:1544px;height:1px;background:#dde2e7"></div>
<svg class="a" style="left:19px;top:554px;" width="14" height="10" viewBox="0 0 14 10"><path d="M2 2.5L6.8 7.3L11.6 2.5" fill="none" stroke="#444" stroke-width="1.1"/></svg>
<svg class="a" style="left:37px;top:582.75px;" width="10" height="12" viewBox="0 0 10 12"><path d="M2.4 1.5L7.2 6L2.4 10.5" fill="none" stroke="#444" stroke-width="1.1"/></svg>
<svg class="a" style="left:37px;top:610.5px;" width="10" height="12" viewBox="0 0 10 12"><path d="M2.4 1.5L7.2 6L2.4 10.5" fill="none" stroke="#444" stroke-width="1.1"/></svg>
<svg class="a" style="left:37px;top:638.5px;" width="10" height="12" viewBox="0 0 10 12"><path d="M2.4 1.5L7.2 6L2.4 10.5" fill="none" stroke="#444" stroke-width="1.1"/></svg>
<svg class="a" style="left:37px;top:667.0px;" width="10" height="12" viewBox="0 0 10 12"><path d="M2.4 1.5L7.2 6L2.4 10.5" fill="none" stroke="#444" stroke-width="1.1"/></svg>
<svg class="a" style="left:37px;top:695.0px;" width="12" height="12" viewBox="0 0 12 12"><path d="M2.4 3L5.6 6L2.4 9M8.2 1.5V10.5" fill="none" stroke="#444" stroke-width="1.1"/></svg>
<div class="a" style="left:16px;top:759px;width:1544px;height:1px;background:#dde2e7"></div>
<svg class="a" style="left:20px;top:768px;" width="16" height="16" viewBox="0 0 16 16"><path d="M1.2 1H14.6L9.4 7.4V14.6L6.4 13.8V7.4Z" fill="none" stroke="#8d979f" stroke-width="1" stroke-linejoin="round"/></svg>
<svg class="a" style="left:52px;top:769px;" width="16" height="14" viewBox="0 0 16 14"><path d="M1.5 1.5L7.8 7.2L14.1 1.5M1.5 6.5L7.8 12.2L14.1 6.5" fill="none" stroke="#8d979f" stroke-width="1" stroke-linejoin="round"/></svg>
<svg class="a" style="left:75px;top:768px;" width="16" height="16" viewBox="0 0 16 16"><path d="M2.5 5.6L8 1L13.5 5.6M2.5 10.4L8 15L13.5 10.4" fill="none" stroke="#8d979f" stroke-width="1" stroke-linejoin="round"/><path d="M1 8H15" stroke="#c9c9c9" stroke-width="1.3"/></svg>
<svg class="a" style="left:25px;top:808px;" width="8" height="16" viewBox="0 0 8 16"><circle cx="4" cy="3.3" r="1.15" fill="#1a1a2a"/><circle cx="4" cy="7.4" r="1.15" fill="#1a1a2a"/><circle cx="4" cy="11.6" r="1.15" fill="#1a1a2a"/></svg>
<div class="a" style="left:1135px;top:804px;width:38px;height:25px;background:#fafbfb;border:1px solid #abb8b6;border-radius:5px"></div>
<svg class="a" style="left:1144px;top:807px;" width="20" height="19" viewBox="0 0 20 19"><path d="M4.2 8.2Q5 4.3 9.6 4.2Q12.6 4.2 14.4 6.4" fill="none" stroke="#222" stroke-width="1.7"/><path d="M15.8 3.2V8H11.2Z" fill="#222"/><path d="M15.4 10.6Q14.6 14.6 10 14.6Q7 14.6 5.2 12.4" fill="none" stroke="#3db8ee" stroke-width="1.7"/><path d="M3.8 15.6V10.8H8.4Z" fill="#3db8ee"/></svg>
<div class="a" style="left:1181px;top:804px;width:106px;height:25px;background:#fafbfb;border:1px solid #748592;border-radius:5px"></div>
<svg class="a" style="left:1192px;top:809px;" width="15" height="15" viewBox="0 0 15 15"><path d="M2.2 3.2Q2.2 1.6 3.8 1.6H9.4L12.8 5V11.6Q12.8 13.2 11.2 13.2H3.8Q2.2 13.2 2.2 11.6Z" fill="none" stroke="#6d6d6d" stroke-width="1.2"/><path d="M4.6 13.2V9.3H10.4V13.2" fill="none" stroke="#5cc3ef" stroke-width="1.2"/></svg>
<div class="t" style="left:1212.2px;top:807.03px;height:20px;line-height:20px;font-size:12.7px;color:#6b767f;font-weight:normal;">Сохранить</div>
<div class="a" style="left:1295px;top:804px;width:101px;height:25px;background:#fafbfb;border:1px solid #c5d0cf;border-radius:5px"></div>
<svg class="a" style="left:1306px;top:807px;" width="16" height="18" viewBox="0 0 16 18"><path d="M2.2 4.3H13.8M6.2 4.3V2.6H9.8V4.3" fill="none" stroke="#5cc3ef" stroke-width="1.1"/><path d="M3.8 6.6V14.4Q3.8 15.6 5 15.6H11Q12.2 15.6 12.2 14.4V6.6" fill="none" stroke="#4a4a4a" stroke-width="1.2"/></svg>
<div class="t" style="left:1325.6px;top:807.03px;height:20px;line-height:20px;font-size:12.7px;color:#b9c3c4;font-weight:normal;">Отменить</div>
<div class="a" style="left:1404px;top:804px;width:63px;height:25px;background:#2c3b4d;border-radius:5px"></div>
<svg class="a" style="left:1415px;top:808px;" width="16" height="16" viewBox="0 0 16 16"><path d="M2 8.5L6 12.5L14 3.5" fill="none" stroke="#18222c" stroke-width="1.5"/></svg>
<div class="t" style="left:1434.9px;top:806.54px;height:20px;line-height:20px;font-size:13.2px;color:#fff;font-weight:normal;">OK</div>
<div class="a" style="left:1475px;top:804px;width:92px;height:25px;background:#91a19f;border-radius:5px"></div>
<svg class="a" style="left:1488px;top:810px;" width="13" height="13" viewBox="0 0 13 13"><path d="M1.5 1.5L11.5 11.5M11.5 1.5L1.5 11.5" stroke="#1e2326" stroke-width="1.4"/></svg>
<div class="t" style="left:1505.7px;top:807.03px;height:20px;line-height:20px;font-size:12.7px;color:#fff;font-weight:normal;">Закрыть</div>
<div class="red" style="left:5px;top:68px;width:247px;height:37px"></div>
<div class="red" style="left:132px;top:434px;width:131px;height:37px"></div>
<div class="red" style="left:1434px;top:495px;width:132px;height:220px"></div>
</div>
<div class="a" style="left:1488.5px;top:570.5px;width:202px;height:133px;background:#fefefe;border:1px solid #ccd4d8;border-radius:6px;box-shadow:0 2px 5px rgba(0,0,0,.07)"></div>
<div class="t" style="left:1497.4px;top:580.63px;height:20px;line-height:20px;font-size:12.7px;color:#979ea3;font-weight:normal;">По умолчанию</div>
<div class="t" style="left:1497.4px;top:603.83px;height:20px;line-height:20px;font-size:12.7px;color:#979ea3;font-weight:normal;">Запретить</div>
<div class="t" style="left:1497.4px;top:627.13px;height:20px;line-height:20px;font-size:12.7px;color:#979ea3;font-weight:normal;">Разрешить</div>
<div class="a" style="left:1489px;top:657px;width:204px;height:1px;background:#d3dade"></div>
<div class="a" style="left:1501px;top:668.3px;width:37.5px;height:24.2px;background:#fff;border:1px solid #9fafac;border-radius:5px"></div>
<div class="a" style="left:1548px;top:668.3px;width:37.5px;height:24.2px;background:#fff;border:1px solid #9fafac;border-radius:5px"></div>
<div class="a" style="left:1594.2px;top:668.3px;width:37.5px;height:24.2px;background:#fff;border:1px solid #9fafac;border-radius:5px"></div>
<div class="a" style="left:1640.2px;top:668.3px;width:37.5px;height:24.2px;background:#fff;border:1px solid #9fafac;border-radius:5px"></div>
<svg class="a" style="left:1511px;top:671px;" width="18" height="18" viewBox="0 0 18 18"><path d="M4.3 8.3Q5 5 9 5Q11.5 5 12.8 6.8M13.7 9.7Q13 13 9 13Q6.5 13 5.2 11.2" fill="none" stroke="#b5c0c6" stroke-width="1.2"/><path d="M13.9 4.5V7.6H10.8Z M4.1 13.5V10.4H7.2Z" fill="#b5c0c6"/></svg>
<svg class="a" style="left:1558px;top:672px;" width="18" height="18" viewBox="0 0 18 18"><path d="M9 3V15M3 9H15" stroke="#2a2a2a" stroke-width="1.6"/></svg>
<svg class="a" style="left:1604px;top:672px;" width="18" height="18" viewBox="0 0 18 18"><circle cx="4.6" cy="9" r="1.4" fill="#2a2a2a"/><circle cx="9" cy="9" r="1.4" fill="#2a2a2a"/><circle cx="13.4" cy="9" r="1.4" fill="#2a2a2a"/></svg>
<svg class="a" style="left:1650px;top:672px;" width="18" height="18" viewBox="0 0 18 18"><path d="M3.5 3.5L14.5 14.5M14.5 3.5L3.5 14.5" stroke="#2a2a2a" stroke-width="1.4"/></svg>
</body></html>
